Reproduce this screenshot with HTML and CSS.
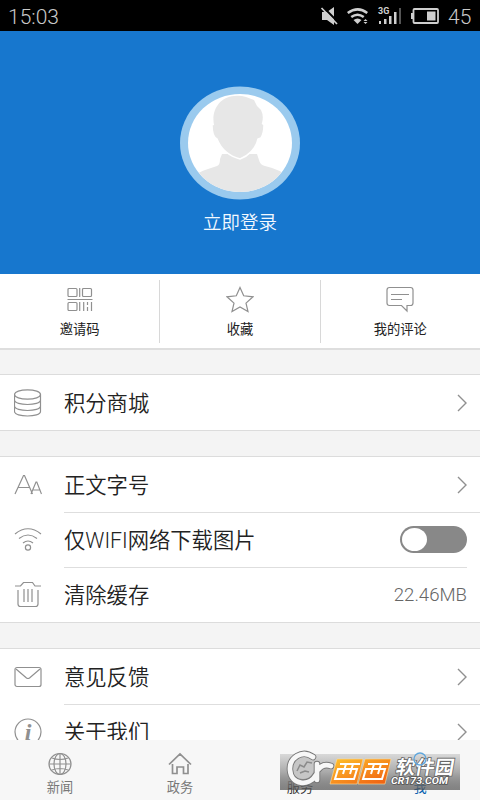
FILE: index.html
```html
<!DOCTYPE html>
<html lang="zh-CN">
<head>
<meta charset="UTF-8">
<title>我</title>
<link rel="stylesheet" href="styles.css">
</head>
<body>
<div class="phone">
  <header class="status">
    <span class="time">15:03</span>
    <svg class="status-icons" width="124" height="24" viewBox="0 0 124 24">
      <g fill="#cfcfcf">
        <path d="M2 8h5l7-5v18l-7-5H2z"/>
        <path d="M27 8q11-8 21 0l-1.500 2q-9-6.500-18 0z"/>
        <path d="M30.500 12q7-5 14 0l-1.500 2q-5.500-4-11 0z"/>
        <path d="M33.500 16q4-3 8 0l-4 4z"/>
        <path d="M43.500 17l2-2 2 2zM43.500 18h4l-2 2z"/>
        <rect x="59" y="17" width="2" height="3"/><rect x="64" y="15" width="2.500" height="5"/><rect x="69" y="12" width="2.500" height="8"/><rect x="74" y="8" width="2.500" height="12"/>
        <rect x="79" y="4" width="2" height="16" fill="#555"/>
        <rect x="91" y="9" width="2" height="6"/><rect x="107" y="7.500" width="8.500" height="9"/>
        <text x="58" y="10" class="net">3G</text>
      </g>
      <path d="M2 5l15 15" stroke="#000" stroke-width="2" transform="translate(1.500 -1.500)"/>
      <path d="M1.500 4l15.500 16" stroke="#cfcfcf" stroke-width="1.700"/>
      <rect x="93.500" y="5" width="24.500" height="14" rx="1" fill="none" stroke="#cfcfcf" stroke-width="1.800"/>
    </svg>
    <span class="battery">45</span>
  </header>

  <section class="hero">
    <svg class="avatar" width="120" height="114" viewBox="0 0 120 114">
      <defs><clipPath id="face"><ellipse cx="60" cy="57" rx="52" ry="49"/></clipPath></defs>
      <ellipse cx="60" cy="57" rx="60" ry="56.500" fill="#9acaee"/>
      <ellipse cx="60" cy="57" rx="52" ry="49" fill="#fff"/>
      <g clip-path="url(#face)" fill="#e7e7e7">
        <path d="M8 94q10-8 20-11l9-3q3-1 3-7l2-5h35l2 6q1 5 6 6 15 3 28 14v20H8z"/>
        <path d="M34 38C31 23 40 11 54 10q6-1 12 1l8 3 3 6 4 4q3 6 1 13l2 2q0 8-3 13l-3 1c-2 10-10 17-18 20-11-3-19-10-23-20-4-2-5-8-5-14z" stroke="#fff" stroke-width="1.500"/>
        <path d="M34 39C31 24 40 11 54 10q6-1 12 1l8 3 3 6 4 4q3 6 1 13l-8 12H39z"/>
      </g>
    </svg>
    <span class="login">立即登录</span>
  </section>

  <nav class="actions">
    <div class="action">
      <svg width="28" height="28" viewBox="0 0 28 28" class="line"><rect x="2" y="2.500" width="9" height="8" rx="1"/><rect x="16.500" y="2.500" width="9" height="8" rx="1"/><rect x="2" y="16.500" width="9" height="8" rx="1"/><path d="M13.700 2v9M1.500 13.500h25M13.700 16v9M17.700 16v9M21.500 16v3M21.500 21v4M25.500 16v9"/></svg>
      <span>邀请码</span>
    </div>
    <div class="action">
      <svg width="28" height="28" viewBox="0 0 28 28" class="line"><path d="M14 1.500l3.700 8.300 9.300 1-7 6.300 2 8.400-8-4.500-8 4.500 2-8.400-7-6.300 9.300-1z"/></svg>
      <span>收藏</span>
    </div>
    <div class="action">
      <svg width="28" height="28" viewBox="0 0 28 28" class="line"><path d="M3.500 1.500h21q2.500 0 2.500 2.500v13q0 2.500-2.500 2.500H21V25l-5.500-5.500h-12Q1 19.500 1 17V4q0-2.500 2.500-2.500zM5 8.500h18M5 13.500h11"/></svg>
      <span>我的评论</span>
    </div>
  </nav>

  <main class="groups">
    <section class="group">
      <div class="row">
        <svg class="icon line" viewBox="0 0 28 28"><ellipse cx="13.500" cy="5.500" rx="13" ry="4.700"/><path d="M.5 5.500v17c0 6 26 6 26 0v-17M.5 11c0 6 26 6 26 0M.5 17c0 6 26 6 26 0"/></svg>
        <div class="cell"><span class="name">积分商城</span><svg class="arrow" viewBox="0 0 10 18"><path d="M1 1l8 8-8 8"/></svg></div>
      </div>
    </section>
    <section class="group">
      <div class="row">
        <svg class="icon line" viewBox="0 0 28 28"><path d="M1 23L9.500 4.500h1L18.500 23M4.500 16.500h11M17 23l5-12h.800l4.700 12M19 19h7.500"/></svg>
        <div class="cell"><span class="name">正文字号</span><svg class="arrow" viewBox="0 0 10 18"><path d="M1 1l8 8-8 8"/></svg></div>
      </div>
      <div class="row inset">
        <svg class="icon line" viewBox="0 0 28 28"><path d="M1 8q13-10.500 26 0M5 12.500q9-7 18 0M9 17q5-4 10 0"/><circle cx="14" cy="21.500" r="2.600"/></svg>
        <div class="cell"><span class="name">仅WIFI网络下载图片</span><span class="switch"></span></div>
      </div>
      <div class="row">
        <svg class="icon line" viewBox="0 0 28 28"><path d="M1 5h5.500l3-3.500h9L21 5h6M4 9v14q0 2.500 2.500 2.500h15Q24 25.500 24 23V9M10 8v13M14 8v13M18 8v13"/></svg>
        <div class="cell"><span class="name">清除缓存</span><span class="size">22.46MB</span></div>
      </div>
    </section>
    <section class="group">
      <div class="row">
        <svg class="icon line" viewBox="0 0 28 28"><rect x="1" y="4.500" width="26" height="19" rx="2"/><path d="M2 6l10.500 9q1.500 1 3 0L26 6"/></svg>
        <div class="cell"><span class="name">意见反馈</span><svg class="arrow" viewBox="0 0 10 18"><path d="M1 1l8 8-8 8"/></svg></div>
      </div>
      <div class="row">
        <svg class="icon line" viewBox="0 0 28 28"><circle cx="14" cy="14" r="13"/><text x="14" y="22" text-anchor="middle" class="info">i</text></svg>
        <div class="cell"><span class="name">关于我们</span><svg class="arrow" viewBox="0 0 10 18"><path d="M1 1l8 8-8 8"/></svg></div>
      </div>
    </section>
  </main>

  <footer class="tabs">
    <div class="tab">
      <svg width="24" height="24" viewBox="0 0 24 24" class="line"><ellipse cx="12" cy="12" rx="11" ry="10.500"/><ellipse cx="12" cy="12" rx="6" ry="10.500"/><path d="M12 1.500v21M1 12h22M4 6q8 3 16 0M4 18q8-3 16 0"/></svg>
      <span>新闻</span>
    </div>
    <div class="tab">
      <svg width="24" height="24" viewBox="0 0 24 24" class="line thick"><path d="M1 12.500L12 2l11 10.500M4.500 12v9.500H9V15h6.500v6.500H20V12"/></svg>
      <span>政务</span>
    </div>
    <div class="tab">
      <svg width="24" height="24" viewBox="0 0 24 24" class="line"></svg>
      <span>服务</span>
    </div>
    <div class="tab active">
      <svg width="24" height="24" viewBox="0 0 24 24"></svg>
      <span>我</span>
    </div>
    <svg class="brand" width="184" height="42" viewBox="0 0 184 42">
      <defs>
        <linearGradient id="plate" x1="0" y1="0" x2="0" y2="1"><stop offset="0" stop-color="#d9d9d9"/><stop offset=".5" stop-color="#aaa"/><stop offset="1" stop-color="#505050" stop-opacity=".7"/></linearGradient>
        <linearGradient id="orange" x1="0" y1="0" x2="1" y2="1"><stop offset="0" stop-color="#ffc32c"/><stop offset="1" stop-color="#ef5a10"/></linearGradient>
      </defs>
      <rect y="4" width="180" height="36" fill="url(#plate)"/>
      <circle cx="23" cy="18" r="11" fill="#c6c6c6"/>
      <path d="M17 21l3-6 4 2 3-5 5 1M20 23l5-2 4 1" fill="none" stroke="#8b8b8b" stroke-width="1.500"/>
      <g fill="none" stroke-linecap="round" stroke-linejoin="round">
        <path d="M33 7C22-1 9 8 10 20c1 15 19 17 26 5M37 14v16M38 20q5-7 13-4" stroke="#777" stroke-width="6.500"/>
        <path d="M33 7C22-1 9 8 10 20c1 15 19 17 26 5M37 14v16M38 20q5-7 13-4" stroke="#f7f7f7" stroke-width="4.700"/>
      </g>
      <path d="M57 9h26l-6 25H50zM85 9h26l-6 25H78z" fill="url(#orange)" stroke="#ffe0a0" stroke-width=".6"/>
      <path d="M60 14h20M58 19h19l-3 10H55zM66 14l-3 10M73 14l-3 10M88 14h20M86 19h19l-3 10H83zM94 14l-3 10M101 14l-3 10" fill="none" stroke="#fff" stroke-width="2"/>
      <g transform="translate(115 24) skewX(-10)"><text class="brand-cn" textLength="58" lengthAdjust="spacingAndGlyphs">软件园</text></g>
      <text x="111" y="34" class="brand-url" textLength="57" lengthAdjust="spacingAndGlyphs">CR173.COM</text>
      <circle cx="140" cy="9" r="6" fill="none" stroke="#5fa6dc" stroke-width="1.300"/>
    </svg>
  </footer>
</div>
</body>
</html>
```
FILE: styles.css
```css
* { box-sizing: border-box; }
body { margin: 0; font-family: Roboto, "Noto Sans CJK SC", sans-serif; color: #222; }
svg { display: block; flex: none; }
.phone { width: 480px; height: 800px; overflow: hidden; display: flex; flex-direction: column; background: #f4f4f4; }
.status { height: 31px; flex: none; background: #000; color: #c9c9c9; display: flex; align-items: center; padding: 2px 8px 0; font-size: 21px; font-weight: 300; }
.time { flex: 1; }
.status-icons { margin: -2px 4px 0 0; }
.net { font: bold 9px Roboto, sans-serif; }
.battery { width: 24px; }
.hero { height: 243px; flex: none; background: #1777ce; display: flex; flex-direction: column; align-items: center; padding-top: 55px; }
.login { margin-top: 9px; font-size: 18.5px; font-weight: 350; line-height: 28px; color: #f3f9ff; }
.actions { height: 76px; flex: none; display: flex; background: #fff; border-bottom: 2px solid #dedede; padding: 6px 0 5px; }
.action { flex: 1; display: flex; flex-direction: column; align-items: center; padding-top: 6px; font-size: 13.3px; line-height: 20px; }
.action + .action { border-left: 1px solid #d8d8d8; }
.action span { margin-top: 6px; }
.line { fill: none; stroke: #909090; stroke-width: 1.2; }
.thick { stroke-width: 1.7; }
.groups { flex: 1; min-height: 0; overflow: hidden; padding-top: 24px; }
.group { background: #fff; border: solid #dcdcdc; border-width: 1px 0; }
.group + .group { margin-top: 25px; }
.row { display: flex; align-items: center; height: 55px; padding-left: 14px; }
.icon { width: 28px; height: 28px; }
.cell { flex: 1; margin-left: 22px; height: 55px; padding-right: 13px; display: flex; align-items: center; justify-content: space-between; font-size: 21.3px; }
.name { padding-bottom: 3px; font-weight: 350; }
.row + .row .cell { border-top: 1px solid #dedede; }
.inset + .row { padding-right: 13px; }
.inset + .row .cell { padding-right: 0; }
.arrow { width: 10px; height: 18px; fill: none; stroke: #909090; stroke-width: 1.4; }
.switch { width: 67px; height: 27px; margin-top: -2px; border-radius: 14px; background: #888; padding: 2px; }
.switch::before { content: ""; display: block; width: 25px; height: 23px; border-radius: 50%; background: #fff; }
.size { font-size: 18.6px; font-weight: 350; color: #666; }
.info { font: italic bold 24px "Liberation Serif", serif; fill: #909090; stroke: none; }
.tabs { position: relative; height: 60px; flex: none; background: #f7f7f7; display: flex; }
.tab { flex: 1; display: flex; flex-direction: column; align-items: center; padding-top: 12px; font-size: 13.2px; line-height: 20px; color: #777; }
.tab span { margin-top: 2px; }
.tab:nth-child(3) { color: #333; }
.tab.active { color: #0962b0; }
.brand { position: absolute; left: 280px; top: 10px; }
.brand-cn { font: bold 19px "Noto Sans CJK SC", sans-serif; fill: #fff; stroke: #666; stroke-width: 1.6px; paint-order: stroke; }
.brand-url { font: italic bold 9.5px Roboto, sans-serif; fill: #fff; stroke: #555; stroke-width: 1.5px; paint-order: stroke; }
```
